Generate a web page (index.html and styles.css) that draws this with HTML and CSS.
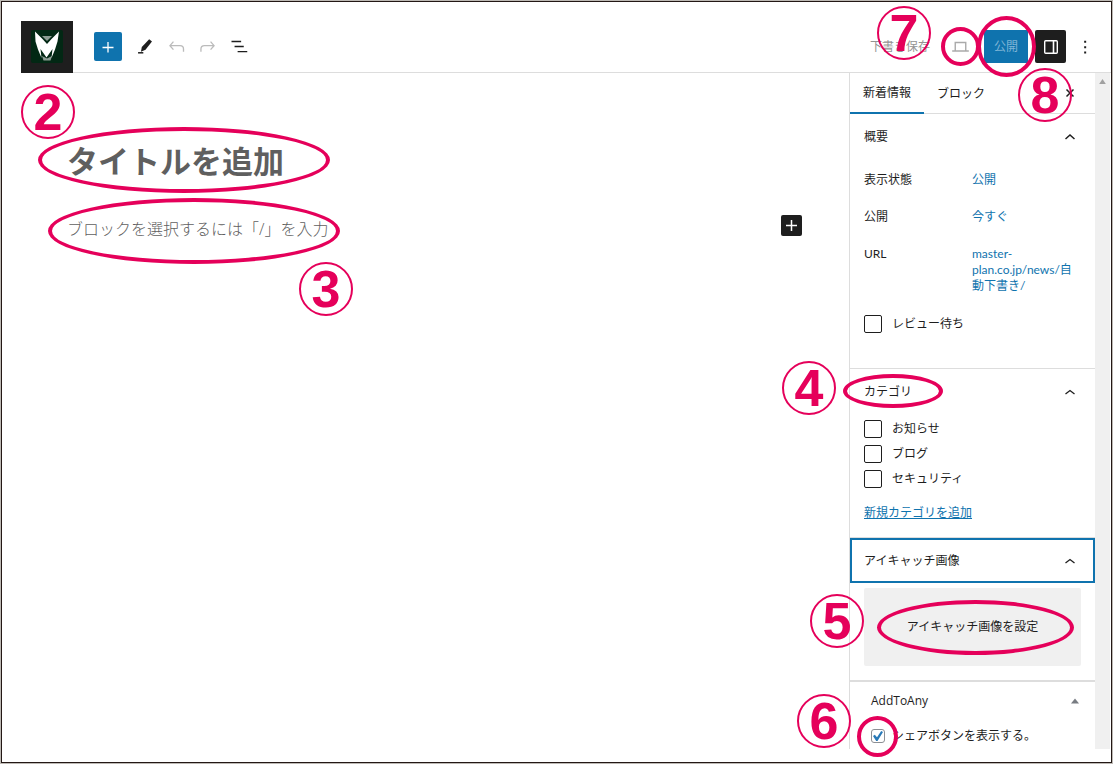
FILE: index.html
```html
<!DOCTYPE html>
<html lang="ja">
<head>
  <meta charset="UTF-8">
  <meta name="viewport" content="width=device-width, initial-scale=1.0">
  <title>新着情報の投稿</title>
  <link rel="stylesheet" href="styles.css">
</head>
<body>
  <div class="frame">
    <header class="toolbar">
      <a class="logo" href="#" aria-label="サイト">
        <svg viewBox="0 0 52 52" width="52" height="52">
          <rect x="10" y="9" width="32" height="33" rx="2" fill="#022814"/>
          <path d="M21 15h10l-5 5z" fill="#8d9c94"/>
          <path d="M21 35l5 2.500 5-2.500-1.500 4.500h-7z" fill="#8d9c94"/>
          <path d="M14 10.500l7.500 7.500 4.500 5 4.500-5 7.500-7.500-1.500 10-2.500 8-3.500 8.500 1-9-6 8.500-6-8.500 1 9-3.500-8.500-2.500-8z" fill="#fff"/>
        </svg>
      </a>
      <button class="insert-btn" type="button" aria-label="ブロックを追加">
        <svg viewBox="0 0 28 28" width="28" height="28"><path d="M14 9v10.500M8.500 14.500h11" stroke="#fff" stroke-width="1.300" fill="none"/></svg>
      </button>
      <button class="icon-btn" type="button" aria-label="ツール">
        <svg viewBox="0 0 24 24" width="21" height="21"><path d="M16.200 3.800l3.200 2.600-7.400 9.300-5.200 2.200 1-5.200z" fill="#1e1e1e"/><path d="M3.500 19.200h6" stroke="#1e1e1e" stroke-width="1.700"/></svg>
      </button>
      <button class="icon-btn" type="button" aria-label="元に戻す" disabled>
        <svg viewBox="0 0 24 24" width="21" height="21"><path d="M8.500 6.500L4.500 11l4 4.500M4.500 11H16c2.300 0 4 1.500 4 3.800V18" stroke="#bbb" stroke-width="1.500" fill="none"/></svg>
      </button>
      <button class="icon-btn" type="button" aria-label="やり直す" disabled>
        <svg viewBox="0 0 24 24" width="21" height="21"><path d="M15.500 6.500l4 4.500-4 4.500M19.500 11H8.500c-2.300 0-4 1.500-4 3.800V18" stroke="#bbb" stroke-width="1.500" fill="none"/></svg>
      </button>
      <button class="icon-btn" type="button" aria-label="リスト表示">
        <svg viewBox="0 0 24 24" width="21" height="21"><path d="M4 6.300h11M7.500 12H18M11 17.800h11" stroke="#1e1e1e" stroke-width="1.600"/></svg>
      </button>

      <div class="toolbar-right">
        <button class="save-btn" type="button" disabled>下書き保存<span class="badge badge-7">7</span></button>
        <button class="preview-btn" type="button" aria-label="プレビュー" disabled>
          <svg viewBox="0 0 24 24" width="21" height="21"><path d="M6 16.500V7.500h12v9M2.500 17.200h19" stroke="#aaa" stroke-width="1.600" fill="none"/></svg>
          <span class="ring ring-preview"></span>
        </button>
        <button class="publish-btn" type="button">公開<span class="ring ring-publish"></span></button>
        <button class="panel-btn" type="button" aria-label="設定">
          <svg viewBox="0 0 20 20" width="20" height="20"><rect x="3.700" y="3.700" width="12.600" height="12.600" rx="1" fill="none" stroke="#fff" stroke-width="1.400"/><path d="M12.500 4v12" stroke="#fff" stroke-width="1.600"/></svg>
        </button>
        <button class="more-btn" type="button" aria-label="オプション">
          <svg viewBox="0 0 24 24" width="20" height="20"><path d="M11 4.500h2.400v2.400H11zM11 11h2.400v2.400H11zM11 17.500h2.400v2.400H11z" fill="#1e1e1e"/></svg>
        </button>
      </div>
    </header>

    <div class="workspace">
      <main class="editor">
        <h1 class="post-title">タイトルを追加</h1>
        <div class="block-row">
          <p class="placeholder">ブロックを選択するには「/」を入力</p>
          <button class="block-insert" type="button" aria-label="ブロックを追加">
            <svg viewBox="0 0 21 21" width="21" height="21"><path d="M10.500 5v11M5 10.500h11" stroke="#fff" stroke-width="1.500"/></svg>
          </button>
        </div>
        <span class="badge badge-2">2</span>
        <span class="ring ring-title"></span>
        <span class="ring ring-block"></span>
        <span class="badge badge-3">3</span>
      </main>

      <aside class="sidebar">
        <div class="tabs">
          <button class="tab active" type="button">新着情報</button>
          <button class="tab" type="button">ブロック</button>
          <button class="close-btn" type="button" aria-label="閉じる">
            <svg viewBox="0 0 20 20" width="20" height="20"><path d="M6.500 6.500l7 7M13.500 6.500l-7 7" stroke="#1e1e1e" stroke-width="1.500"/></svg>
          </button>
          <span class="badge badge-8">8</span>
        </div>

        <section class="panel summary">
          <button class="panel-head" type="button">概要
            <svg viewBox="0 0 12 12" width="12" height="12"><path d="M1.500 8L6 4l4.500 4" stroke="#1e1e1e" stroke-width="1.500" fill="none"/></svg>
          </button>
          <dl class="details">
            <dt>表示状態</dt><dd><a href="#">公開</a></dd>
            <dt>公開</dt><dd><a href="#">今すぐ</a></dd>
            <dt>URL</dt><dd><a href="#">master-<br>plan.co.jp/news/自<br>動下書き/</a></dd>
          </dl>
          <label class="check"><input type="checkbox">レビュー待ち</label>
        </section>

        <section class="panel category">
          <button class="panel-head" type="button">カテゴリ
            <svg viewBox="0 0 12 12" width="12" height="12"><path d="M1.500 8L6 4.500l4.500 3.500" stroke="#1e1e1e" stroke-width="1.300" fill="none"/></svg>
          </button>
          <div class="check-list">
            <label class="check"><input type="checkbox">お知らせ</label>
            <label class="check"><input type="checkbox">ブログ</label>
            <label class="check"><input type="checkbox">セキュリティ</label>
          </div>
          <a class="add-link" href="#">新規カテゴリを追加</a>
          <span class="ring ring-category"></span>
          <span class="badge badge-4">4</span>
        </section>

        <section class="panel thumbnail">
          <button class="panel-head focused" type="button">アイキャッチ画像
            <svg viewBox="0 0 12 12" width="12" height="12"><path d="M1.500 8L6 4.500l4.500 3.500" stroke="#1e1e1e" stroke-width="1.300" fill="none"/></svg>
          </button>
          <button class="image-btn" type="button">アイキャッチ画像を設定</button>
          <span class="ring ring-image"></span>
          <span class="badge badge-5">5</span>
        </section>

        <section class="share">
          <button class="share-head" type="button">AddToAny
            <svg viewBox="0 0 8 6" width="8" height="6"><path d="M0 5.500L4 .5l4 5z" fill="#787c82"/></svg>
          </button>
          <label class="share-check"><input type="checkbox" checked>シェアボタンを表示する。</label>
          <span class="ring ring-share"></span>
          <span class="badge badge-6">6</span>
        </section>
      </aside>

      <div class="scrollbar">
        <svg viewBox="0 0 8 6" width="7" height="5"><path d="M0 6l4-6 4 6z" fill="#a0a0a0"/></svg>
      </div>
    </div>
  </div>
</body>
</html>
```

FILE: styles.css
```css
* {
  box-sizing: border-box;
}
body {
  margin: 0;
  padding: 1px;
  background: #bdb9b4;
  color: #1e1e1e;
  font-family: Lato, "Noto Sans CJK JP", sans-serif;
  font-size: 12px;
  line-height: 16px;
}
button {
  margin: 0;
  padding: 0;
  border: none;
  background: none;
  color: inherit;
  font: inherit;
  cursor: pointer;
}
svg {
  display: block;
}
a {
  color: #0f73ae;
  text-decoration: none;
}
.frame {
  display: flex;
  flex-direction: column;
  min-height: calc(100vh - 2px);
  padding: 19px 0 13px;
  background: #fff;
  border: 1px solid #231815;
}

/* toolbar */
.toolbar {
  display: flex;
  align-items: center;
  height: 52px;
  margin-left: 19px;
  border-bottom: 1px solid #ddd;
}
.logo {
  align-self: flex-start;
  width: 52px;
  height: 52px;
  margin-right: 21px;
  background: #1e1e1e;
}
.insert-btn {
  width: 28px;
  height: 29px;
  margin-right: 8px;
  background: #0f73ae;
  border-radius: 2px;
}
.icon-btn {
  display: flex;
  justify-content: center;
  width: 31px;
}
.toolbar-right {
  display: flex;
  align-items: center;
  margin-left: auto;
  padding-right: 16px;
}
.save-btn, .preview-btn, .publish-btn {
  position: relative;
}
.save-btn {
  margin-right: 20px;
  color: #949494;
}
.preview-btn {
  margin-right: 13px;
}
.publish-btn {
  width: 44px;
  height: 33px;
  margin-right: 7px;
  background: #0f73ae;
  color: #7fb5d6;
}
.panel-btn {
  display: flex;
  justify-content: center;
  align-items: center;
  width: 31px;
  height: 33px;
  margin-right: 9px;
  background: #1e1e1e;
  border-radius: 2px;
}

/* editor */
.workspace {
  display: flex;
  flex: 1;
}
.editor {
  position: relative;
  flex: 1;
  padding: 64px 47px 0 65px;
}
.post-title {
  margin: 0;
  color: #5f5f5f;
  font-size: 31px;
  line-height: 48px;
}
.block-row {
  display: flex;
  justify-content: space-between;
  align-items: flex-start;
  margin-top: 30px;
}
.placeholder {
  margin: 0;
  color: #5f5f5f;
  font-family: "Open Sans", "Noto Sans CJK JP", sans-serif;
  font-size: 16px;
  font-weight: 300;
  line-height: 28px;
}
.block-insert {
  width: 21px;
  height: 21px;
  background: #1e1e1e;
  border-radius: 2px;
}

/* sidebar */
.sidebar {
  width: 246px;
  border-left: 1px solid #ddd;
}
.tabs {
  position: relative;
  display: flex;
  height: 41px;
  border-bottom: 1px solid #ddd;
}
.tab {
  height: 41px;
  padding: 0 13px;
}
.tab.active {
  border-bottom: 2px solid #0f73ae;
}
.close-btn {
  margin-left: auto;
  padding-right: 15px;
}
.panel {
  position: relative;
  padding: 0 14px;
  border-bottom: 1px solid #ddd;
}
.panel-head {
  display: flex;
  justify-content: space-between;
  align-items: center;
  width: 100%;
  height: 45px;
  padding-right: 5px;
}
.details {
  display: grid;
  grid-template-columns: 108px 1fr;
  row-gap: 21px;
  margin: 13px 0 21px;
}
.details dd {
  margin: 0;
}
.check {
  display: flex;
  align-items: center;
  gap: 10px;
}
.check input {
  appearance: none;
  width: 18px;
  height: 18px;
  margin: 0;
  border: 1px solid #1e1e1e;
  border-radius: 2px;
}
.summary {
  padding-bottom: 35px;
}
.category {
  padding-bottom: 16px;
}
.check-list {
  display: flex;
  flex-direction: column;
  gap: 7px;
  margin: 6px 0 17px;
}
.add-link {
  display: block;
  text-decoration: underline;
}
.thumbnail {
  padding: 0 0 14px;
  border-bottom-width: 2px;
}
.focused {
  padding: 0 17px 0 12px;
  border: 2px solid #0f73ae;
}
.image-btn {
  display: block;
  width: calc(100% - 28px);
  height: 78px;
  margin: 5px 14px 0;
  background: #f0f0f0;
  border-radius: 2px;
}
.share {
  position: relative;
  padding: 11px 16px 0 21px;
}
.share-head {
  display: flex;
  justify-content: space-between;
  align-items: center;
  width: 100%;
  font-family: "Open Sans", sans-serif;
}
.share-check {
  display: flex;
  align-items: center;
  gap: 7px;
  margin-top: 19px;
}
.share-check input {
  appearance: none;
  width: 14px;
  height: 14px;
  margin: 0;
  border: 1px solid #8c8f94;
  border-radius: 3px;
  display: grid;
  place-content: center;
}
.share-check input::before {
  content: "";
  width: 10px;
  height: 10px;
  background: #2a7ab8;
  clip-path: polygon(0 50%, 18% 38%, 40% 62%, 82% 0, 100% 10%, 45% 100%, 32% 100%);
}
.scrollbar {
  display: flex;
  justify-content: center;
  width: 15px;
  padding-top: 6px;
  margin-right: 1px;
  background: #f0f0f0;
}

/* marks over the screen */
.badge, .ring {
  position: absolute;
  z-index: 1;
  border-radius: 50%;
  pointer-events: none;
}
.badge {
  width: 54px;
  height: 54px;
  border: 2px solid #e5005a;
  color: #e5005a;
  font: bold 52px/50px "Liberation Sans", Arial, sans-serif;
  text-align: center;
}
.ring {
  border: 4px solid #e5005a;
}
.badge-2 {
  left: 19px;
  top: 12px;
}
.badge-3 {
  left: 297px;
  top: 189px;
}
.badge-4 {
  left: -68px;
  top: -8px;
}
.badge-5 {
  left: -40px;
  top: 56px;
}
.badge-6 {
  left: -53px;
  top: 12px;
}
.badge-7 {
  left: 7px;
  top: -33px;
}
.badge-8 {
  right: 23px;
  top: -5px;
}
.ring-title {
  left: 36px;
  top: 54px;
  width: 292px;
  height: 66px;
}
.ring-block {
  left: 46px;
  top: 125px;
  width: 292px;
  height: 66px;
}
.ring-preview {
  inset: -9px;
}
.ring-publish {
  inset: -14px -8px -14px -7px;
}
.ring-category {
  left: -7px;
  top: 5px;
  width: 100px;
  height: 34px;
}
.ring-image {
  left: 27px;
  right: 21px;
  top: 62px;
  height: 55px;
}
.ring-share {
  left: 7px;
  top: 34px;
  width: 41px;
  height: 41px;
}
```
